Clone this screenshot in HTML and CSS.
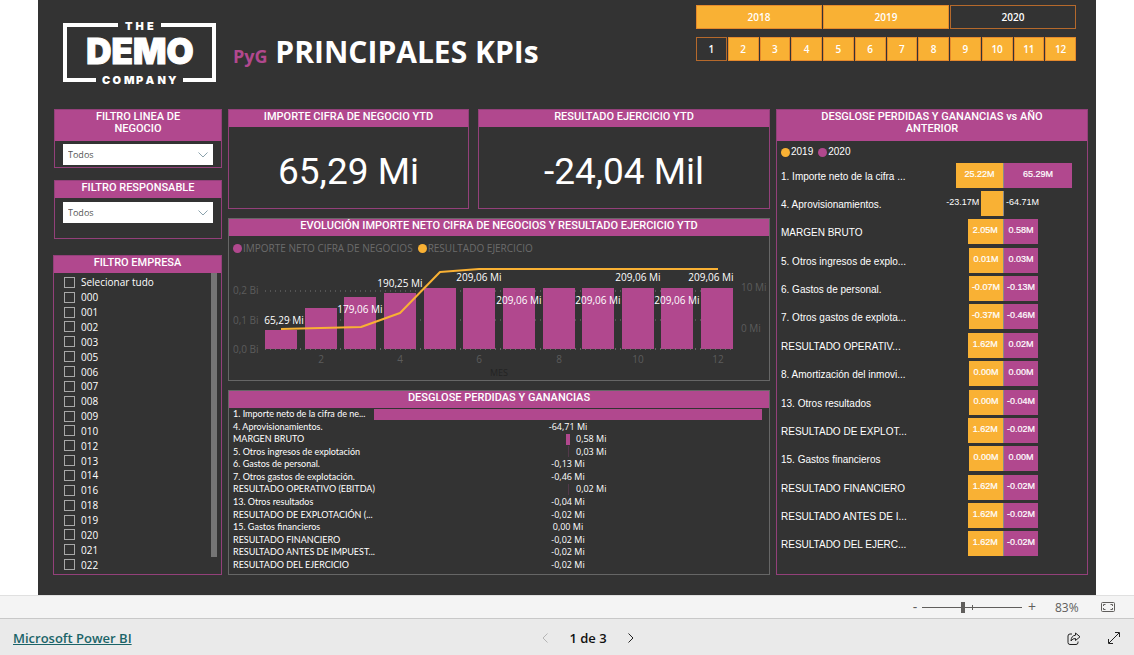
FILE: index.html
```
<!DOCTYPE html>
<html lang="es">
<head>
<meta charset="utf-8">
<meta name="viewport" content="width=device-width, initial-scale=1">
<title>PyG Principales KPIs</title>
<link rel="stylesheet" href="styles.css">
</head>
<body>
<main class="report">
  <header class="top">
    <svg class="logo" viewBox="0 0 155 68" role="img" aria-label="The Demo Company">
      <path class="logo-frame" d="M56 7H3V62H34M99 7H152V62H121"/>
      <text class="logo-small" y="12" x="63 73.500 85">THE</text>
      <text class="logo-big" x="78" y="46">DEMO</text>
      <text class="logo-small" y="66" x="40 50.500 62 74 83.500 95.500 106">COMPANY</text>
    </svg>
    <h1 class="title"><span class="title-tag">PyG</span> PRINCIPALES KPIs</h1>
    <div class="periods">
      <div class="years">
        <button class="tile">2018</button><button class="tile">2019</button><button class="tile tile-on" aria-pressed="true">2020</button>
      </div>
      <div class="months">
        <button class="tile tile-on" aria-pressed="true">1</button><button class="tile">2</button><button class="tile">3</button><button class="tile">4</button><button class="tile">5</button><button class="tile">6</button><button class="tile">7</button><button class="tile">8</button><button class="tile">9</button><button class="tile">10</button><button class="tile">11</button><button class="tile">12</button>
      </div>
    </div>
  </header>

  <div class="board">
    <div class="col-filters">
      <section class="panel filter">
        <h2 class="panel-title two-line"><label for="linea">FILTRO LINEA DE<br>NEGOCIO</label></h2>
        <div class="select-box">
          <select id="linea" class="select"><option>Todos</option></select>
          <svg class="caret" viewBox="0 0 10 6"><path d="M.5.500 5 5 9.500.500"/></svg>
        </div>
      </section>
      <section class="panel filter">
        <h2 class="panel-title"><label for="responsable">FILTRO RESPONSABLE</label></h2>
        <div class="select-box">
          <select id="responsable" class="select"><option>Todos</option></select>
          <svg class="caret" viewBox="0 0 10 6"><path d="M.5.500 5 5 9.500.500"/></svg>
        </div>
      </section>
      <section class="panel company">
        <h2 class="panel-title">FILTRO EMPRESA</h2>
        <div class="company-body">
          <div class="checks">
            <label class="check"><input type="checkbox">Selecionar tudo</label>
            <label class="check"><input type="checkbox">000</label>
            <label class="check"><input type="checkbox">001</label>
            <label class="check"><input type="checkbox">002</label>
            <label class="check"><input type="checkbox">003</label>
            <label class="check"><input type="checkbox">005</label>
            <label class="check"><input type="checkbox">006</label>
            <label class="check"><input type="checkbox">007</label>
            <label class="check"><input type="checkbox">008</label>
            <label class="check"><input type="checkbox">009</label>
            <label class="check"><input type="checkbox">010</label>
            <label class="check"><input type="checkbox">012</label>
            <label class="check"><input type="checkbox">013</label>
            <label class="check"><input type="checkbox">014</label>
            <label class="check"><input type="checkbox">016</label>
            <label class="check"><input type="checkbox">018</label>
            <label class="check"><input type="checkbox">019</label>
            <label class="check"><input type="checkbox">020</label>
            <label class="check"><input type="checkbox">021</label>
            <label class="check"><input type="checkbox">022</label>
          </div>
          <div class="scrollbar"></div>
        </div>
      </section>
    </div>

    <div class="col-main">
      <div class="kpis">
        <section class="panel kpi">
          <h2 class="panel-title">IMPORTE CIFRA DE NEGOCIO YTD</h2>
          <p class="kpi-value">65,29 Mi</p>
        </section>
        <section class="panel kpi">
          <h2 class="panel-title">RESULTADO EJERCICIO YTD</h2>
          <p class="kpi-value">-24,04 Mil</p>
        </section>
      </div>

      <section class="panel panel-gray">
        <h2 class="panel-title">EVOLUCIÓN IMPORTE NETO CIFRA DE NEGOCIOS Y RESULTADO EJERCICIO YTD</h2>
        <div class="legend legend-dim">
          <span class="key"><i class="dot dot-pink"></i>IMPORTE NETO CIFRA DE NEGOCIOS</span>
          <span class="key"><i class="dot dot-gold"></i>RESULTADO EJERCICIO</span>
        </div>
        <svg class="combo" viewBox="0 0 540 122" role="img" aria-label="Evolución mensual">
          <path class="guide" d="M36 33H504M36 62H504M36 91H504"/>
          <path class="bars" d="M36 91V72h32V91zM76 91V50h32V91zM115 91V39h32V91zM155 91V35h32V91zM195 91V30h32V91zM234 91V30h32V91zM274 91V30h32V91zM314 91V30h32V91zM353 91V30h32V91zM393 91V30h32V91zM432 91V30h32V91zM472 91V30h32V91z"/>
          <path class="baseline" d="M36 91H504"/>
          <path class="trend" d="M52 71 92 70 132 69 171 55 211 14 250 11H489"/>
          <g class="axis">
            <text x="4" y="36">0,2 Bi</text><text x="4" y="66">0,1 Bi</text><text x="4" y="95">0,0 Bi</text>
            <text x="512" y="33">10 Mi</text><text x="512" y="74">0 Mi</text>
          </g>
          <g class="axis mid">
            <text x="92" y="105">2</text><text x="171" y="105">4</text><text x="250" y="105">6</text><text x="330" y="105">8</text><text x="409" y="105">10</text><text x="489" y="105">12</text>
            <text class="axis-name" x="270" y="118">MES</text>
          </g>
          <g class="marks mid">
            <text x="55" y="66">65,29 Mi</text><text x="131" y="55">179,06 Mi</text><text x="171" y="29">190,25 Mi</text>
            <text x="250" y="23">209,06 Mi</text><text x="290" y="46">209,06 Mi</text><text x="369" y="46">209,06 Mi</text>
            <text x="409" y="23">209,06 Mi</text><text x="448" y="46">209,06 Mi</text><text x="482" y="23">209,06 Mi</text>
          </g>
        </svg>
      </section>

      <section class="panel panel-gray funnel">
        <h2 class="panel-title">DESGLOSE PERDIDAS Y GANANCIAS</h2>
        <ul class="funnel-rows">
          <li><span>1. Importe neto de la cifra de ne...</span><div class="track"><i class="fbar" style="width:100%"></i></div></li>
          <li><span>4. Aprovisionamientos.</span><div class="track"><b>-64,71 Mi</b></div></li>
          <li><span>MARGEN BRUTO</span><div class="track"><i class="fbar" style="width:1%"></i><b class="pos">0,58 Mi</b></div></li>
          <li><span>5. Otros ingresos de explotación</span><div class="track"><i class="fbar faint"></i><b class="pos">0,03 Mi</b></div></li>
          <li><span>6. Gastos de personal.</span><div class="track"><b>-0,13 Mi</b></div></li>
          <li><span>7. Otros gastos de explotación.</span><div class="track"><b>-0,46 Mi</b></div></li>
          <li><span>RESULTADO OPERATIVO (EBITDA)</span><div class="track"><i class="fbar faint"></i><b class="pos">0,02 Mi</b></div></li>
          <li><span>13. Otros resultados</span><div class="track"><b>-0,04 Mi</b></div></li>
          <li><span>RESULTADO DE EXPLOTACIÓN (...</span><div class="track"><b>-0,02 Mi</b></div></li>
          <li><span>15. Gastos financieros</span><div class="track"><b>0,00 Mi</b></div></li>
          <li><span>RESULTADO FINANCIERO</span><div class="track"><b>-0,02 Mi</b></div></li>
          <li><span>RESULTADO ANTES DE IMPUEST...</span><div class="track"><b>-0,02 Mi</b></div></li>
          <li><span>RESULTADO DEL EJERCICIO</span><div class="track"><b>-0,02 Mi</b></div></li>
        </ul>
      </section>
    </div>

    <section class="panel compare">
      <h2 class="panel-title two-line">DESGLOSE PERDIDAS Y GANANCIAS vs AÑO<br>ANTERIOR</h2>
      <div class="legend">
        <span class="key"><i class="dot dot-gold"></i>2019</span>
        <span class="key"><i class="dot dot-pink"></i>2020</span>
      </div>
      <ul class="compare-rows">
        <li><span>1. Importe neto de la cifra ...</span><div class="prev"><b style="width:80%">25.22M</b></div><div class="curr"><b style="width:82%">65.29M</b></div></li>
        <li><span>4. Aprovisionamientos.</span><div class="prev"><em>-23.17M</em><b style="width:37%"></b></div><div class="curr"><em>-64.71M</em></div></li>
        <li><span>MARGEN BRUTO</span><div class="prev"><b style="width:60%">2.05M</b></div><div class="curr"><b style="width:41%">0.58M</b></div></li>
        <li><span>5. Otros ingresos de explo...</span><div class="prev"><b style="width:58%">0.01M</b></div><div class="curr"><b style="width:41%">0.03M</b></div></li>
        <li><span>6. Gastos de personal.</span><div class="prev"><b style="width:58%">-0.07M</b></div><div class="curr"><b style="width:41%">-0.13M</b></div></li>
        <li><span>7. Otros gastos de explota...</span><div class="prev"><b style="width:58%">-0.37M</b></div><div class="curr"><b style="width:41%">-0.46M</b></div></li>
        <li><span>RESULTADO OPERATIV...</span><div class="prev"><b style="width:60%">1.62M</b></div><div class="curr"><b style="width:41%">0.02M</b></div></li>
        <li><span>8. Amortización del inmovi...</span><div class="prev"><b style="width:58%">0.00M</b></div><div class="curr"><b style="width:41%">0.00M</b></div></li>
        <li><span>13. Otros resultados</span><div class="prev"><b style="width:58%">0.00M</b></div><div class="curr"><b style="width:41%">-0.04M</b></div></li>
        <li><span>RESULTADO DE EXPLOT...</span><div class="prev"><b style="width:60%">1.62M</b></div><div class="curr"><b style="width:41%">-0.02M</b></div></li>
        <li><span>15. Gastos financieros</span><div class="prev"><b style="width:58%">0.00M</b></div><div class="curr"><b style="width:41%">0.00M</b></div></li>
        <li><span>RESULTADO FINANCIERO</span><div class="prev"><b style="width:60%">1.62M</b></div><div class="curr"><b style="width:41%">-0.02M</b></div></li>
        <li><span>RESULTADO ANTES DE I...</span><div class="prev"><b style="width:60%">1.62M</b></div><div class="curr"><b style="width:41%">-0.02M</b></div></li>
        <li><span>RESULTADO DEL EJERC...</span><div class="prev"><b style="width:60%">1.62M</b></div><div class="curr"><b style="width:41%">-0.02M</b></div></li>
      </ul>
    </section>
  </div>
</main>

<div class="zoombar">
  <button class="zoom-step" aria-label="Alejar">-</button>
  <input class="zoom-range" type="range" min="0" max="100" value="41" aria-label="Zoom">
  <button class="zoom-step" aria-label="Acercar">+</button>
  <span class="zoom-level">83%</span>
  <button class="icon-btn" aria-label="Ajustar a la página">
    <svg class="fit" viewBox="0 0 14 10"><rect x=".5" y=".5" width="13" height="9" rx="1"/><path d="M2.500 4V2.500H4.500M9.500 2.500H11.500V4M11.500 6V7.500H9.500M4.500 7.500H2.500V6"/></svg>
  </button>
</div>

<footer class="footer">
  <a class="brand" href="#">Microsoft Power BI</a>
  <nav class="pager">
    <button class="icon-btn" aria-label="Anterior" disabled><svg class="chev off" viewBox="0 0 6 10"><path d="M5.500.500 1 5 5.500 9.500"/></svg></button>
    <span>1 de 3</span>
    <button class="icon-btn" aria-label="Siguiente"><svg class="chev" viewBox="0 0 6 10"><path d="M.500.500 5 5 .500 9.500"/></svg></button>
  </nav>
  <div class="actions">
    <button class="icon-btn" aria-label="Compartir"><svg class="share" viewBox="0 0 14 13"><path d="M5 2H3Q1 2 1 4V10.500Q1 12.500 3 12.500H9Q11 12.500 11 10.500V9.500M8.500 1 13 4.800 8.500 8.500V6.500Q5.500 6.300 4 9Q4.200 3.600 8.500 3.200Z"/></svg></button>
    <button class="icon-btn" aria-label="Pantalla completa"><svg class="expand" viewBox="0 0 12 12"><path d="M1 11 11 1M7 .500H11.500V5M.500 7V11.500H5"/></svg></button>
  </div>
</footer>
</body>
</html>
```
FILE: styles.css
```
:root {
  --pink: #b1488e;
  --gold: #f9b134;
  --dark: #333333;
  --line: #666666;
  --segoe: "Open Sans", "Noto Sans", sans-serif;
  --din: Roboto, sans-serif;
}

* { box-sizing: border-box; }

body {
  margin: 0;
  min-height: 100vh;
  display: flex;
  flex-direction: column;
  background: #fff;
  font-family: var(--segoe);
}

h1, h2, p, ul { margin: 0; padding: 0; }
ul { list-style: none; }
button { font-family: inherit; cursor: pointer; }

.report {
  flex: 1;
  margin: 0 38px;
  padding: 0 8px 20px 15px;
  display: flex;
  flex-direction: column;
  background: var(--dark);
  color: #fff;
}

/* Header */
.top {
  display: flex;
  align-items: flex-start;
  height: 109px;
  padding: 0 12px 0 9px;
}
.logo { width: 155px; height: 68px; margin-top: 18px; flex: none; }
.logo-frame { fill: none; stroke: #fff; stroke-width: 4; }
.logo-big, .logo-small { font-family: Inter, sans-serif; font-weight: 900; fill: #fff; }
.logo-big { font-size: 35px; text-anchor: middle; stroke: #fff; stroke-width: 1; }
.logo-small { font-size: 11px; }
.title {
  margin: 32px 0 0 16px;
  flex: 1;
  font-size: 30px;
  line-height: 40px;
  font-weight: 700;
  white-space: nowrap;
}
.title-tag { font-size: 18px; font-weight: 700; color: var(--pink); }

.periods { width: 380px; margin-top: 5px; display: grid; gap: 8px; }
.years { display: grid; grid-template-columns: repeat(3, 1fr); gap: 1px; }
.months { display: grid; grid-template-columns: repeat(12, 1fr); gap: 1px; }
.tile {
  height: 24px;
  padding: 0;
  border: 1px solid #e58a2c;
  background: var(--gold);
  color: #fff;
  font-size: 10px;
  font-weight: 600;
}
.tile-on { background: var(--dark); border-color: #b5692c; }

/* Board */
.board {
  flex: 1;
  display: grid;
  grid-template-columns: 169fr 542fr 312fr;
  gap: 6px;
}
.col-filters, .col-main { display: flex; flex-direction: column; min-width: 0; }
.col-main { gap: 9px; }

.panel { border: 1px solid #93407a; display: flex; flex-direction: column; min-width: 0; }
.panel-gray { border-color: var(--line); }
.panel-title {
  height: 17px;
  padding-top: 1px;
  background: var(--pink);
  text-align: center;
  font-family: var(--din);
  font-size: 11px;
  font-weight: 500;
  line-height: 12px;
}
.panel-title.two-line { height: 31px; }

/* Slicers */
.filter { margin-left: 1px; height: 59px; margin-bottom: 12px; }
.filter + .company { margin-top: 4px; }
.select-box { position: relative; margin: 3px 8px 0; }
.panel-title:not(.two-line) + .select-box { margin-top: 4px; }
.select {
  display: block;
  width: 100%;
  height: 21px;
  padding: 0 5px;
  border: 0;
  border-radius: 0;
  appearance: none;
  background: #fff;
  color: #555;
  font-family: var(--segoe);
  font-size: 9px;
}
.caret { position: absolute; right: 5px; top: 8px; width: 10px; height: 6px; fill: none; stroke: #8ba3ad; pointer-events: none; }
.company { flex: 1; }
.company-body { flex: 1; display: flex; padding: 0 4px 2px 10px; }
.checks { flex: 1; padding-top: 2px; display: grid; grid-auto-rows: 1fr; }
.check { display: flex; align-items: center; gap: 6px; font-size: 10px; line-height: 14px; font-weight: 500; }
.check input { appearance: none; width: 11px; height: 11px; margin: 0; border: 1px solid #a8a8a8; }
.scrollbar { width: 6px; margin-bottom: 15px; background: #757575; }

/* KPI cards */
.kpis { display: grid; grid-template-columns: 241fr 292fr; gap: 9px; height: 100px; }
.kpi-value {
  flex: 1;
  display: flex;
  align-items: center;
  justify-content: center;
  padding-top: 8px;
  font-family: var(--din);
  font-size: 37px;
  font-weight: 400;
}

/* Legends */
.legend { display: flex; gap: 5px; padding: 5px 4px 0; font-size: 10px; line-height: 14px; }
.legend-dim { color: #6b6b6b; }
.key { display: flex; align-items: center; gap: 1px; white-space: nowrap; }
.dot { width: 9px; height: 9px; border-radius: 50%; }
.dot-pink { background: var(--pink); }
.dot-gold { background: var(--gold); }

/* Monthly chart */
.combo { display: block; width: 100%; height: auto; margin-top: 3px; font-size: 10px; }
.guide, .baseline { fill: none; stroke: #777; stroke-width: 1; stroke-dasharray: 1 4; }
.bars { fill: var(--pink); }
.trend { fill: none; stroke: var(--gold); stroke-width: 2; stroke-linejoin: round; }
.axis { fill: #5c5c5c; }
.axis-name { fill: #232323; font-size: 9px; }
.mid { text-anchor: middle; }
.marks { fill: #fff; font-size: 10px; font-weight: 500; }

/* Funnel */
.funnel { flex: 1; }
.funnel-rows { flex: 1; display: grid; grid-auto-rows: 1fr; padding: 0 7px 3px 4px; font-family: Lato, var(--segoe); font-size: 9px; line-height: 12px; }
.funnel-rows li { display: grid; grid-template-columns: 141px 1fr; white-space: nowrap; align-items: center; }
.track { display: grid; align-items: center; height: 100%; font-family: var(--segoe); }
.track > * { grid-area: 1 / 1; }
.track b { justify-self: center; font-weight: 500; }
.track .pos { justify-self: start; padding-left: calc(50% + 8px); }
.fbar { justify-self: center; height: 11px; background: var(--pink); }
.fbar.faint { width: 1px; background: #52394a; }

/* Year comparison */
.compare { font-family: "Liberation Sans", Arial, sans-serif; }
.compare .legend { padding-top: 4px; }
.compare-rows { flex: 1; display: grid; grid-auto-rows: 1fr; padding: 2px 0 16px 4px; font-size: 10px; }
.compare-rows li { display: grid; grid-template-columns: 1fr 60px 83px; align-items: center; white-space: nowrap; }
.compare-rows span { padding-top: 2px; }
.prev, .curr { display: flex; height: 25px; }
.prev { justify-content: flex-end; border-right: 1px solid #8a8a8a; }
.prev b, .curr b { padding-bottom: 3px; display: flex; align-items: center; justify-content: center; font-size: 9px; font-weight: 400; -webkit-text-stroke: 0.2px #fff; }
.prev b { background: var(--gold); }
.curr b { background: var(--pink); }
.prev em, .curr em { font-style: normal; font-size: 9px; padding: 6px 2px 0; }

/* Viewer chrome */
.zoombar {
  height: 24px;
  display: flex;
  align-items: center;
  justify-content: flex-end;
  padding-right: 19px;
  background: #f4f4f4;
  border-top: 1px solid #e0e0e0;
  border-bottom: 1px solid #c8c8c8;
  color: #605e5c;
}
.zoom-step { width: 20px; padding: 0; border: 0; background: none; color: inherit; font-size: 14px; line-height: 20px; }
.zoom-step:first-child { width: 14px; }
.zoom-range {
  width: 100px;
  height: 12px;
  margin: 0;
  appearance: none;
  background:
    linear-gradient(#605e5c, #605e5c) 50% 4px / 1px 5px no-repeat,
    linear-gradient(#605e5c, #605e5c) 0 6px / 100% 1px no-repeat;
}
.zoom-range::-webkit-slider-thumb { appearance: none; width: 4px; height: 11px; background: #605e5c; }
.zoom-level { margin-left: 13px; width: 46px; font-size: 12px; }
.icon-btn { display: flex; padding: 0; border: 0; background: none; }
.icon-btn svg { fill: none; stroke: #222; stroke-width: 1; }
.icon-btn .fit { width: 14px; height: 10px; stroke: #605e5c; }

.footer {
  height: 36px;
  display: grid;
  grid-template-columns: 1fr auto 1fr;
  align-items: center;
  padding: 2px 14px 0 13px;
  background: #eaeaea;
}
.brand { justify-self: start; color: #1b6468; font-size: 13px; font-weight: 600; }
.pager { display: flex; align-items: center; gap: 21px; margin-left: 43px; font-size: 13px; font-weight: 600; color: #111; }
.chev { width: 6px; height: 10px; }
.icon-btn .off { stroke: #b5b5b5; }
.actions { justify-self: end; display: flex; align-items: center; gap: 27px; }
.share { width: 14px; height: 13px; }
.expand { width: 12px; height: 12px; }
```
